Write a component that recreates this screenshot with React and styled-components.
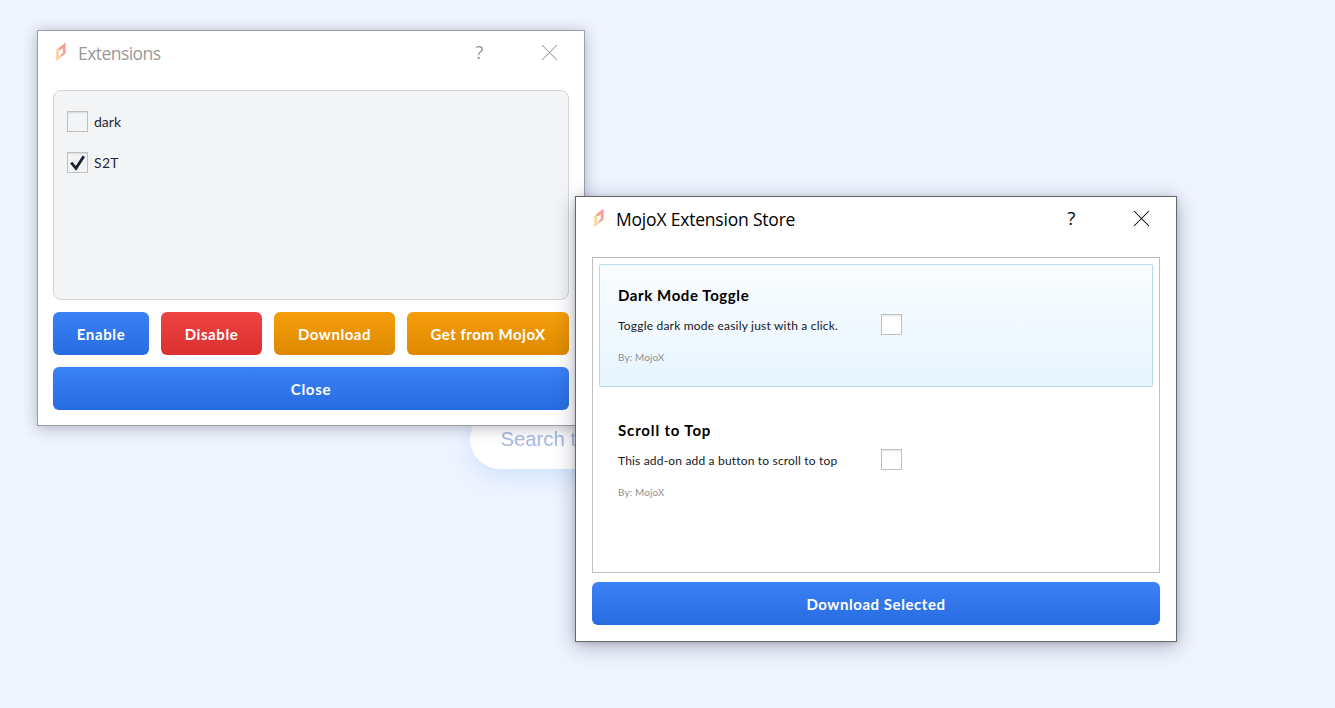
import React from 'react';
import styled, { createGlobalStyle } from 'styled-components';

const Global = createGlobalStyle`
  * { box-sizing: border-box; }
  body { margin: 0; background: #f0f4ff; overflow: hidden; font-family: Lato, sans-serif; }
`;

const Desktop = styled.main`
  position: relative;
  width: 1335px;
  height: 708px;
  overflow: hidden;
  background: #f0f4ff;
`;

const SearchBar = styled.div`
  position: absolute;
  left: 470px;
  top: 409px;
  width: 396px;
  height: 60px;
  padding-left: 30.5px;
  border-radius: 30px;
  background: #fff;
  box-shadow: 0 8px 24px rgba(120, 175, 250, 0.28);
  color: #a9bbdf;
  font: 20.3px/60px "Liberation Sans", sans-serif;
`;

const Window = styled.section`
  position: absolute;
  left: ${(p) => p.$x}px;
  top: ${(p) => p.$y}px;
  width: ${(p) => p.$w}px;
  height: ${(p) => p.$h}px;
  display: flex;
  flex-direction: column;
  background: #fff;
  border: 1px solid ${(p) => (p.$active ? '#66676b' : '#9d9ea6')};
  box-shadow: ${(p) =>
    p.$active
      ? '0 4px 20px rgba(20, 25, 50, 0.32), 0 1px 5px rgba(20, 25, 50, 0.16)'
      : '0 2px 14px rgba(20, 25, 50, 0.3)'};
`;

const TitleBar = styled.header`
  display: flex;
  align-items: center;
  height: 43px;
  padding: 0 26px 0 17px;
  color: ${(p) => (p.$active ? '#000' : '#999')};
`;

const Title = styled.h1`
  flex: 1;
  margin: 0 0 0 10px;
  font: 400 17.5px/24px "Open Sans", sans-serif;
  letter-spacing: ${(p) => p.$track}px;
`;

const Help = styled.span`
  width: 10px;
  margin: 0 55.5px 2px 0;
  font: 400 18px/24px "Open Sans", sans-serif;
`;

const Body = styled.div`
  flex: 1;
  display: flex;
  flex-direction: column;
  gap: ${(p) => p.$gap}px;
  padding: ${(p) => p.$pad};
`;

const ExtensionList = styled.ul`
  list-style: none;
  margin: 0;
  height: 210px;
  padding: 20px 13px;
  display: flex;
  flex-direction: column;
  gap: 20px;
  border: 1px solid #d1d5db;
  border-radius: 8px;
  background: #f3f4f6;
`;

const ExtensionRow = styled.li`
  display: flex;
  align-items: center;
  gap: 6px;
  height: 21px;
  color: #1f2937;
  font: 14px/20px Lato, sans-serif;
  letter-spacing: ${(p) => p.$track}px;
`;

const Box = styled.span`
  flex: none;
  display: block;
  width: 21px;
  height: 21px;
  border: 1px solid #c0c0c0;
  background: ${(p) => (p.$filled ? '#fff' : 'transparent')};
  box-shadow: inset 0 2px 2px -1px rgba(0, 0, 0, 0.12);
`;

const ButtonRow = styled.div`
  display: flex;
  gap: 12px;
`;

const tones = {
  blue: ['#3b82f6', '#276ce0'],
  red: ['#ef4444', '#da2f2f'],
  amber: ['#f59e0b', '#de8900'],
};

const Button = styled.button`
  width: ${(p) => p.$w};
  height: 43px;
  padding: 1px 0 0;
  border: 0;
  border-radius: 6px;
  background: linear-gradient(${(p) => tones[p.$tone].join(', ')});
  color: #fff;
  font: 700 15px/42px Lato, sans-serif;
  letter-spacing: ${(p) => p.$track}px;
  white-space: nowrap;
`;

const StoreList = styled.div`
  height: 316px;
  padding: 6px;
  border: 1px solid #c0c0c0;
`;

const StoreItem = styled.article`
  display: flex;
  height: 123px;
  margin-bottom: 12px;
  padding: 18px;
  border: 1px solid ${(p) => (p.$selected ? '#b8daef' : 'transparent')};
  border-radius: 2px;
  background: ${(p) => (p.$selected ? 'linear-gradient(#fafdff, #e7f5ff)' : 'none')};
`;

const Info = styled.div`
  width: 263px;
  white-space: nowrap;
`;

const Name = styled.h2`
  margin: 2px 0 0;
  font: 700 15px/20px Lato, sans-serif;
  letter-spacing: ${(p) => p.$track}px;
  color: #000;
`;

const Description = styled.p`
  margin: 12px 0 0;
  font: 12px/18px Lato, sans-serif;
  letter-spacing: ${(p) => p.$track}px;
  color: #16181d;
`;

const Author = styled.p`
  margin: 15px 0 0;
  font: 10px/14px Lato, sans-serif;
  letter-spacing: 0.1px;
  color: #909090;
`;

const CheckSlot = styled.div`
  padding-top: 31px;
`;

function Logo() {
  return (
    <svg width="13" height="21" viewBox="0 0 13 21">
      <path fillRule="evenodd" d="M1.2 8.2 10.4.7V11.6L1.2 19.3ZM3.8 9.3V14.6L7.9 11.2V5.9Z" fill="#fdd19a" />
      <path d="M3 6.8 10.4.7V11.6L6.2 15.1V12.6L7.9 11.2V5.9L5.2 8.1Z" fill="#fb9a96" />
    </svg>
  );
}

function CloseIcon() {
  return (
    <svg width="17" height="17" viewBox="0 0 17 17" fill="none" stroke="currentColor" strokeWidth="1.05">
      <path d="M1 1 16 16M16 1 1 16" />
    </svg>
  );
}

const Tick = styled.svg`
  display: block;
`;

function Check({ checked, filled }) {
  return (
    <Box $filled={filled}>
      {checked && (
        <Tick width="19" height="19" viewBox="0 0 19 19" fill="none" stroke="#18202e" strokeWidth="2.8">
          <path d="M3.2 9.6 8 15.3 15.8 3.2" />
        </Tick>
      )}
    </Box>
  );
}

function Bar({ title, track, active }) {
  return (
    <TitleBar $active={active}>
      <Logo />
      <Title $track={track}>{title}</Title>
      <Help>?</Help>
      <CloseIcon />
    </TitleBar>
  );
}

const extensions = [
  { name: 'dark', track: 0 },
  { name: 'S2T', checked: true, track: 0.3 },
];

const store = [
  { name: 'Dark Mode Toggle', text: 'Toggle dark mode easily just with a click.', selected: true, nt: 0.6, dt: 0.2 },
  { name: 'Scroll to Top', text: 'This add-on add a button to scroll to top', nt: 0.85, dt: 0.18 },
];

export default function App() {
  return (
    <Desktop>
      <Global />
      <SearchBar>Search t</SearchBar>
      <Window $x={37} $y={30} $w={548} $h={396}>
        <Bar title="Extensions" track={-0.55} />
        <Body $gap={12} $pad="16px 15px 15px">
          <ExtensionList>
            {extensions.map((e) => (
              <ExtensionRow key={e.name} $track={e.track}>
                <Check checked={e.checked} />
                {e.name}
              </ExtensionRow>
            ))}
          </ExtensionList>
          <ButtonRow>
            <Button $tone="blue" $w="96px" $track={0.65}>Enable</Button>
            <Button $tone="red" $w="101px" $track={0.6}>Disable</Button>
            <Button $tone="amber" $w="121px" $track={0.55}>Download</Button>
            <Button $tone="amber" $w="162px" $track={0.5}>Get from MojoX</Button>
          </ButtonRow>
          <Button $tone="blue" $w="100%" $track={0.7}>Close</Button>
        </Body>
      </Window>
      <Window $x={575} $y={196} $w={602} $h={446} $active>
        <Bar title="MojoX Extension Store" track={-0.2} active />
        <Body $gap={9} $pad="17px 16px 16px">
          <StoreList>
            {store.map((s) => (
              <StoreItem key={s.name} $selected={s.selected}>
                <Info>
                  <Name $track={s.nt}>{s.name}</Name>
                  <Description $track={s.dt}>{s.text}</Description>
                  <Author>By: MojoX</Author>
                </Info>
                <CheckSlot>
                  <Check filled />
                </CheckSlot>
              </StoreItem>
            ))}
          </StoreList>
          <Button $tone="blue" $w="100%" $track={0.56}>Download Selected</Button>
        </Body>
      </Window>
    </Desktop>
  );
}
